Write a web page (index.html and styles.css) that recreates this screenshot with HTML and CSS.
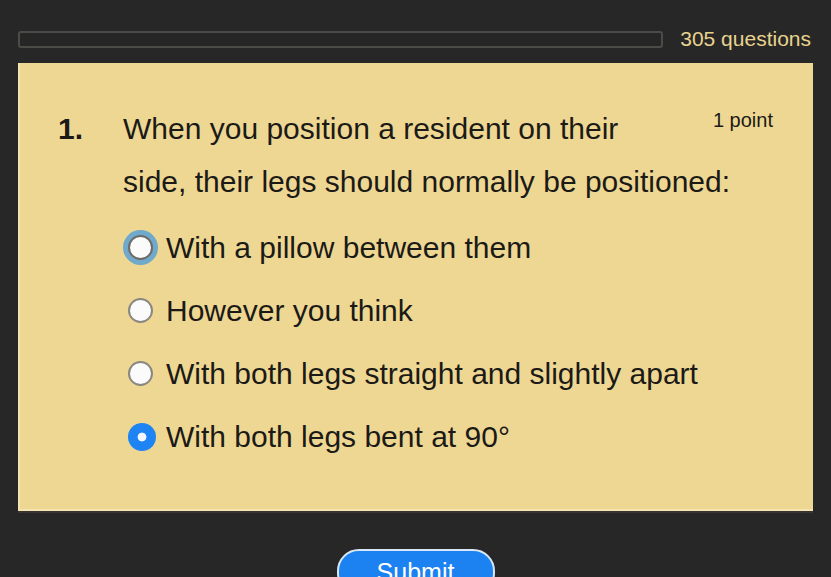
FILE: index.html
```html
<!DOCTYPE html>
<html>
<head>
<meta charset="utf-8">
<link rel="stylesheet" href="styles.css">
</head>
<body>
<div class="page">
  <div class="topbar">
    <div class="progress"></div>
    <div class="count">305 questions</div>
  </div>
  <div class="card">
    <div class="question">
      <div class="num">1.</div>
      <div class="qtext"><span class="points">1 point</span>When you position a resident on their side, their legs should normally be positioned:</div>
    </div>
    <div class="options">
      <label class="option"><span class="radio focused"></span><span class="otext">With a pillow between them</span></label>
      <label class="option"><span class="radio"></span><span class="otext">However you think</span></label>
      <label class="option"><span class="radio"></span><span class="otext">With both legs straight and slightly apart</span></label>
      <label class="option"><span class="radio checked"></span><span class="otext">With both legs bent at 90°</span></label>
    </div>
  </div>
  <div class="actions">
    <button class="submit">Submit</button>
  </div>
</div>
</body>
</html>
```
FILE: styles.css
```css
html, body {
  margin: 0;
  padding: 0;
  background: #282727;
  font-family: "Liberation Sans", Arial, sans-serif;
  height: 100%;
  overflow: hidden;
}
.page {
  padding: 30px 18px 0 18px;
}
.topbar {
  display: flex;
  align-items: center;
  gap: 17px;
  height: 18px;
}
.progress {
  flex: 1;
  height: 13px;
  border: 2px solid #4c4b48;
  border-radius: 3px;
  background: #262626;
}
.count {
  color: #e8d38e;
  font-size: 21px;
  padding-right: 2px;
}
.card {
  margin-top: 15px;
  height: 448px;
  box-sizing: border-box;
  background: #eed792;
  border-left: 2px solid #f6e4b0;
  border-bottom: 2px solid #f6e4b0;
  box-shadow: 0 2px 0 #3a3433;
  padding: 39px 20px 0 38px;
  color: #1b1a17;
}
.question {
  display: flex;
  font-size: 30px;
  line-height: 53px;
}
.num {
  width: 65px;
  flex: none;
  font-weight: bold;
}
.qtext {
  flex: 1;
}
.points {
  float: right;
  font-size: 20px;
  line-height: 36px;
  margin-left: 40px;
  margin-right: 20px;
}
.options {
  margin-top: 8px;
  padding-left: 70px;
}
.option {
  display: flex;
  align-items: center;
  height: 63px;
  font-size: 30px;
}
.radio {
  width: 21px;
  height: 21px;
  border: 2px solid #8a8780;
  border-radius: 50%;
  background: #fbfbfb;
  margin: 0 13px 0 0;
  flex: none;
}
.radio.focused {
  border-color: #6c6b68;
  box-shadow: 0 0 0 5px #6fa9cb;
}
.radio.checked {
  width: 28px;
  height: 28px;
  margin: 0 10px 0 0;
  border: none;
  background: radial-gradient(circle, #f3f7ff 0 4px, #1e84f4 4.8px);
}
.otext {
  white-space: nowrap;
}
.actions {
  display: flex;
  justify-content: center;
  margin-top: 38px;
}
.submit {
  width: 158px;
  height: 46px;
  border: 2px solid #d9e8f7;
  border-radius: 22px;
  background: #1c82f2;
  color: #ffffff;
  font-family: "Liberation Sans", Arial, sans-serif;
  font-size: 25px;
  padding: 0;
}
```
